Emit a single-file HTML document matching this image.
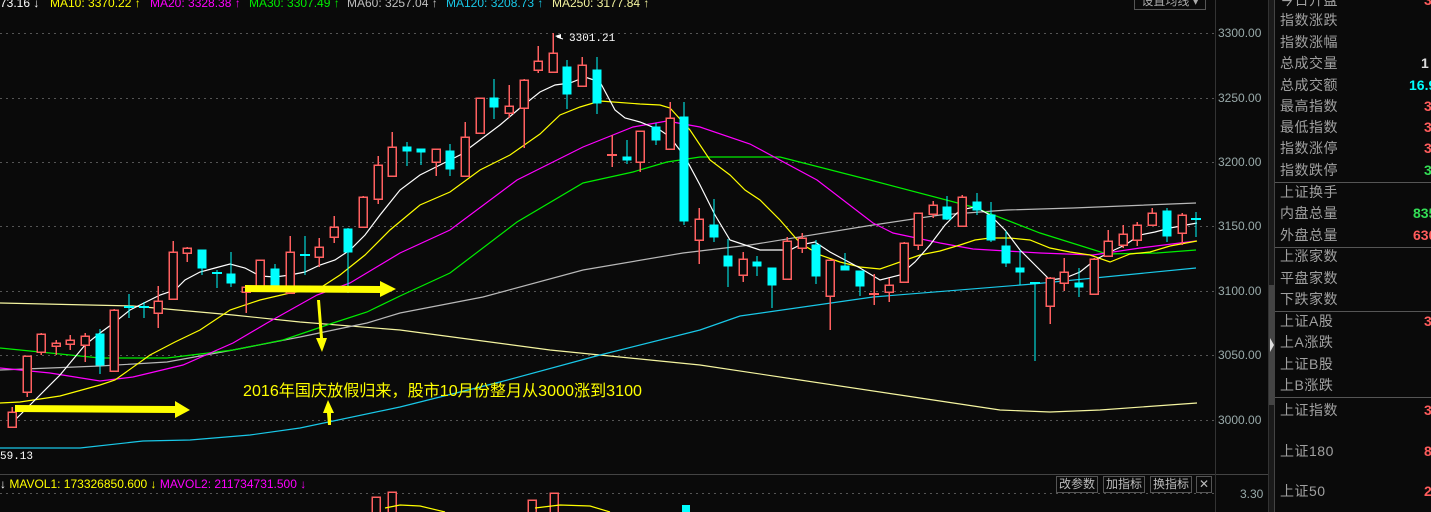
<!DOCTYPE html>
<html><head><meta charset="utf-8"><style>
body{margin:0;background:#0a0a0a;width:1431px;height:512px;overflow:hidden;position:relative;font-family:"Liberation Sans","Noto Sans CJK SC",sans-serif}
.t{position:absolute;white-space:nowrap}
.rl{position:absolute;left:1280px;font-size:14px;color:#a0a0a0;line-height:16px;font-family:"Liberation Sans","Noto Sans CJK SC",sans-serif;letter-spacing:0.5px}
.v{position:absolute;font-size:14px;line-height:16px;font-weight:bold}
.btn{position:absolute;top:476px;height:15px;border:1px solid #555;color:#bbb;font-size:12px;line-height:15px;padding:0 2px;background:#0a0a0a}
</style></head><body>
<svg width="1431" height="512" style="position:absolute;left:0;top:0">
<g stroke="#555" stroke-dasharray="2,4" stroke-width="1">
<line x1="0" y1="33.5" x2="1215" y2="33.5"/><line x1="0" y1="98.5" x2="1215" y2="98.5"/><line x1="0" y1="162.5" x2="1215" y2="162.5"/><line x1="0" y1="226.5" x2="1215" y2="226.5"/><line x1="0" y1="291.5" x2="1215" y2="291.5"/><line x1="0" y1="355.5" x2="1215" y2="355.5"/><line x1="0" y1="420.5" x2="1215" y2="420.5"/><line x1="0" y1="493.5" x2="1215" y2="493.5"/>
</g>
<line x1="0" y1="474.5" x2="1268" y2="474.5" stroke="#444"/>
<line x1="1215.5" y1="0" x2="1215.5" y2="512" stroke="#333"/>
<line x1="1268.5" y1="0" x2="1268.5" y2="512" stroke="#333"/>
<rect x="1269" y="0" width="5" height="512" fill="#1a1a1a"/>
<rect x="1269" y="285" width="5" height="120" fill="#444"/>
<polygon points="1270,338 1274,345 1270,352" fill="#ddd"/>
<line x1="1274.5" y1="0" x2="1274.5" y2="512" stroke="#444"/>
<g stroke="#555"><line x1="1275" y1="182.5" x2="1431" y2="182.5"/><line x1="1275" y1="247.5" x2="1431" y2="247.5"/><line x1="1275" y1="311.5" x2="1431" y2="311.5"/><line x1="1275" y1="397.5" x2="1431" y2="397.5"/></g>
<!-- MAs -->
<g fill="none" stroke-width="1.2">
<polyline stroke="#f5f5a0" points="0,303 133,306 233,315 300,322 400,330 550,350 700,365 800,380 900,395 1000,410 1050,412 1100,410 1197,403"/>
<polyline stroke="#19c8e8" points="0,448 80,448 143,441 190,440 250,435 300,428 400,407 500,382 600,355 700,330 740,316 873,297 1033,284 1196,268"/>
<polyline stroke="#b8b8b8" points="0,370 100,366 167,362 233,350 300,337 367,323 400,313 483,297 583,270 683,253 750,245 873,225 940,215 1007,210 1073,208 1196,203"/>
<polyline stroke="#00ee00" points="0,348 100,358 167,358 233,350 283,340 333,323 367,312 400,296 450,273 517,222 583,183 633,172 667,162 700,157 780,157 870,180 973,207 1040,233 1107,254 1157,253 1196,250"/>
<polyline stroke="#ff00ff" points="0,368 50,373 100,381 133,377 183,365 233,343 267,323 317,295 350,283 400,253 450,230 517,180 583,147 633,127 667,121 700,127 750,144 817,180 873,223 893,233 940,243 973,249 1040,253 1093,255 1140,248 1196,241"/>
<polyline stroke="#ffff00" points="0,403 20,402 60,396 100,385 115,380 150,355 175,342 200,330 230,310 260,300 290,293 320,288 340,275 365,255 390,230 420,205 450,192 480,170 510,155 540,134 560,115 580,107 600,101 640,104 660,105 670,108 690,130 710,160 730,175 745,190 760,200 780,220 800,243 820,255 840,262 860,267 880,269 900,262 920,255 940,251 960,245 975,240 990,238 1010,238 1030,240 1050,248 1070,252 1090,255 1110,262 1130,254 1150,252 1170,246 1197,241"/>
<polyline stroke="#ffffff" points="10,425 30,405 60,375 85,345 100,333 115,322 130,310 150,300 160,295 175,290 185,280 200,272 215,268 230,264 245,268 260,276 275,277 290,275 305,272 320,265 335,260 350,250 365,235 380,215 400,190 420,175 440,165 460,155 480,140 500,125 520,108 540,92 555,85 570,83 585,77 600,82 615,110 625,118 640,122 660,130 670,137 685,157 700,185 715,215 730,240 745,245 760,250 790,250 800,245 815,242 830,252 845,260 860,268 880,280 900,275 915,262 930,245 945,225 960,210 975,207 990,215 1005,230 1020,250 1035,265 1050,280 1065,278 1080,272 1095,260 1110,252 1125,245 1140,235 1155,232 1170,228 1197,223"/>
</g>
<!-- red candles -->
<g stroke="#ff6060" stroke-width="1.5" fill="#0a0a0a" shape-rendering="crispEdges">
<line x1="12" y1="407" x2="12" y2="428"/><rect x="8" y="412" width="8" height="15"/>
<line x1="27" y1="356" x2="27" y2="397"/><rect x="23" y="356" width="8" height="36"/>
<line x1="41" y1="333" x2="41" y2="355"/><rect x="37" y="334" width="8" height="18"/>
<line x1="56" y1="340" x2="56" y2="355"/><rect x="52" y="343" width="8" height="3"/>
<line x1="70" y1="335" x2="70" y2="350"/><rect x="66" y="340" width="8" height="4"/>
<line x1="85" y1="333" x2="85" y2="362"/><rect x="81" y="336" width="8" height="9"/>
<line x1="114" y1="309" x2="114" y2="371"/><rect x="110" y="310" width="8" height="61"/>
<line x1="158" y1="286" x2="158" y2="328"/><rect x="154" y="301" width="8" height="12"/>
<line x1="173" y1="241" x2="173" y2="299"/><rect x="169" y="252" width="8" height="47"/>
<line x1="187" y1="247" x2="187" y2="262"/><rect x="183" y="248" width="8" height="5"/>
<line x1="246" y1="288" x2="246" y2="313"/><rect x="242" y="287" width="8" height="5"/>
<line x1="260" y1="260" x2="260" y2="292"/><rect x="256" y="260" width="8" height="28"/>
<line x1="290" y1="236" x2="290" y2="294"/><rect x="286" y="252" width="8" height="41"/>
<line x1="319" y1="238" x2="319" y2="267"/><rect x="315" y="247" width="8" height="10"/>
<line x1="334" y1="216" x2="334" y2="243"/><rect x="330" y="227" width="8" height="10"/>
<line x1="363" y1="196" x2="363" y2="227"/><rect x="359" y="197" width="8" height="30"/>
<line x1="378" y1="156" x2="378" y2="204"/><rect x="374" y="165" width="8" height="34"/>
<line x1="392" y1="132" x2="392" y2="176"/><rect x="388" y="147" width="8" height="29"/>
<line x1="436" y1="149" x2="436" y2="176"/><rect x="432" y="149" width="8" height="13"/>
<line x1="465" y1="122" x2="465" y2="176"/><rect x="461" y="137" width="8" height="39"/>
<line x1="480" y1="98" x2="480" y2="133"/><rect x="476" y="98" width="8" height="35"/>
<line x1="509" y1="85" x2="509" y2="118"/><rect x="505" y="106" width="8" height="7"/>
<line x1="524" y1="79" x2="524" y2="148"/><rect x="520" y="80" width="8" height="28"/>
<line x1="538" y1="46" x2="538" y2="73"/><rect x="534" y="61" width="8" height="9"/>
<line x1="553" y1="33" x2="553" y2="73"/><rect x="549" y="53" width="8" height="19"/>
<line x1="582" y1="57" x2="582" y2="86"/><rect x="578" y="65" width="8" height="21"/>
<line x1="640" y1="131" x2="640" y2="172"/><rect x="636" y="131" width="8" height="31"/>
<line x1="670" y1="102" x2="670" y2="150"/><rect x="666" y="118" width="8" height="31"/>
<line x1="699" y1="208" x2="699" y2="264"/><rect x="695" y="219" width="8" height="21"/>
<line x1="743" y1="252" x2="743" y2="282"/><rect x="739" y="259" width="8" height="16"/>
<line x1="787" y1="237" x2="787" y2="279"/><rect x="783" y="241" width="8" height="38"/>
<line x1="802" y1="233" x2="802" y2="253"/><rect x="798" y="238" width="8" height="10"/>
<line x1="830" y1="260" x2="830" y2="330"/><rect x="826" y="260" width="8" height="36"/>
<line x1="889" y1="278" x2="889" y2="302"/><rect x="885" y="285" width="8" height="7"/>
<line x1="904" y1="242" x2="904" y2="282"/><rect x="900" y="243" width="8" height="39"/>
<line x1="918" y1="213" x2="918" y2="250"/><rect x="914" y="213" width="8" height="32"/>
<line x1="933" y1="201" x2="933" y2="218"/><rect x="929" y="205" width="8" height="9"/>
<line x1="962" y1="195" x2="962" y2="226"/><rect x="958" y="197" width="8" height="29"/>
<line x1="1050" y1="277" x2="1050" y2="324"/><rect x="1046" y="278" width="8" height="28"/>
<line x1="1064" y1="258" x2="1064" y2="291"/><rect x="1060" y="272" width="8" height="11"/>
<line x1="1094" y1="258" x2="1094" y2="294"/><rect x="1090" y="259" width="8" height="35"/>
<line x1="1108" y1="230" x2="1108" y2="256"/><rect x="1104" y="241" width="8" height="15"/>
<line x1="1123" y1="225" x2="1123" y2="248"/><rect x="1119" y="234" width="8" height="11"/>
<line x1="1137" y1="222" x2="1137" y2="246"/><rect x="1133" y="225" width="8" height="15"/>
<line x1="1152" y1="208" x2="1152" y2="225"/><rect x="1148" y="213" width="8" height="12"/>
<line x1="1182" y1="213" x2="1182" y2="245"/><rect x="1178" y="215" width="8" height="18"/>
<line x1="612" y1="135" x2="612" y2="167"/><line x1="607" y1="155" x2="617" y2="155" stroke-width="2"/>
<line x1="874" y1="274" x2="874" y2="305"/><line x1="869" y1="294" x2="879" y2="294" stroke-width="2"/>
<rect x="372" y="497" width="8" height="20"/><rect x="388" y="492" width="8" height="25"/><rect x="528" y="500" width="8" height="20"/><rect x="550" y="493" width="8" height="25"/>
</g>
<polyline fill="none" stroke="#ff0" stroke-width="1.2" points="385,508 400,505 420,506 445,512"/>
<polyline fill="none" stroke="#ff0" stroke-width="1.2" points="535,508 560,505 590,506 610,512"/>
<rect x="682" y="505" width="8" height="8" fill="#0ff"/>
<!-- cyan candles -->
<g stroke="#00ffff" stroke-width="1.2" fill="#00ffff" shape-rendering="crispEdges">
<line x1="100" y1="329" x2="100" y2="374"/><rect x="96" y="334" width="8" height="31"/>
<line x1="202" y1="250" x2="202" y2="275"/><rect x="198" y="250" width="8" height="18"/>
<line x1="231" y1="252" x2="231" y2="287"/><rect x="227" y="274" width="8" height="9"/>
<line x1="275" y1="264" x2="275" y2="287"/><rect x="271" y="269" width="8" height="16"/>
<line x1="348" y1="228" x2="348" y2="293"/><rect x="344" y="229" width="8" height="23"/>
<line x1="407" y1="142" x2="407" y2="166"/><rect x="403" y="147" width="8" height="4"/>
<line x1="421" y1="149" x2="421" y2="165"/><rect x="417" y="149" width="8" height="3"/>
<line x1="450" y1="144" x2="450" y2="176"/><rect x="446" y="151" width="8" height="18"/>
<line x1="494" y1="79" x2="494" y2="119"/><rect x="490" y="98" width="8" height="9"/>
<line x1="567" y1="60" x2="567" y2="109"/><rect x="563" y="67" width="8" height="27"/>
<line x1="597" y1="57" x2="597" y2="114"/><rect x="593" y="70" width="8" height="33"/>
<line x1="627" y1="140" x2="627" y2="164"/><rect x="623" y="157" width="8" height="3"/>
<line x1="656" y1="123" x2="656" y2="145"/><rect x="652" y="127" width="8" height="13"/>
<line x1="684" y1="102" x2="684" y2="225"/><rect x="680" y="117" width="8" height="104"/>
<line x1="714" y1="199" x2="714" y2="242"/><rect x="710" y="225" width="8" height="12"/>
<line x1="728" y1="239" x2="728" y2="287"/><rect x="724" y="256" width="8" height="10"/>
<line x1="757" y1="256" x2="757" y2="276"/><rect x="753" y="262" width="8" height="4"/>
<line x1="772" y1="268" x2="772" y2="308"/><rect x="768" y="268" width="8" height="17"/>
<line x1="816" y1="240" x2="816" y2="284"/><rect x="812" y="245" width="8" height="31"/>
<line x1="845" y1="253" x2="845" y2="270"/><rect x="841" y="266" width="8" height="4"/>
<line x1="860" y1="271" x2="860" y2="296"/><rect x="856" y="271" width="8" height="15"/>
<line x1="947" y1="196" x2="947" y2="220"/><rect x="943" y="207" width="8" height="12"/>
<line x1="977" y1="193" x2="977" y2="215"/><rect x="973" y="202" width="8" height="8"/>
<line x1="991" y1="202" x2="991" y2="242"/><rect x="987" y="215" width="8" height="25"/>
<line x1="1006" y1="231" x2="1006" y2="267"/><rect x="1002" y="246" width="8" height="17"/>
<line x1="1020" y1="250" x2="1020" y2="285"/><rect x="1016" y="268" width="8" height="4"/>
<line x1="1079" y1="268" x2="1079" y2="297"/><rect x="1075" y="283" width="8" height="4"/>
<line x1="1167" y1="208" x2="1167" y2="242"/><rect x="1163" y="211" width="8" height="25"/>
<line x1="129" y1="294" x2="129" y2="318"/><line x1="124" y1="307" x2="134" y2="307" stroke-width="2"/>
<line x1="144" y1="302" x2="144" y2="318"/><line x1="139" y1="307" x2="149" y2="307" stroke-width="2"/>
<line x1="217" y1="270" x2="217" y2="288"/><line x1="212" y1="273" x2="222" y2="273" stroke-width="2"/>
<line x1="305" y1="236" x2="305" y2="275"/><line x1="300" y1="255" x2="310" y2="255" stroke-width="2"/>
<line x1="1035" y1="283" x2="1035" y2="361"/><line x1="1030" y1="283" x2="1040" y2="283" stroke-width="2"/>
<line x1="1196" y1="212" x2="1196" y2="237"/><line x1="1191" y1="219" x2="1201" y2="219" stroke-width="2"/>
</g>
<!-- arrows -->
<g fill="#ffff00">
<polygon points="15,405 175,406 175,401 190,410 175,418 175,413 15,412"/>
<polygon points="245,285 380,286 380,281 396,289 380,297 380,293 245,292"/>
<polygon points="317,300 320,300 323,338 327,338 322,352 316,338 320,338"/>
<polygon points="328,400 334,413 331,413 331,425 328,425 327,413 323,413"/>
</g>
<polyline points="557,37 563,39" stroke="#fff" fill="none"/>
<polygon points="555,36 561,34 561,39" fill="#fff"/>
<text x="569" y="41" fill="#fff" font-size="11" font-family="Liberation Mono">3301.21</text>
<text x="0" y="459" fill="#fff" font-size="11" font-family="Liberation Mono">59.13</text>
<text x="243" y="396" fill="#ffff00" font-size="16" font-family="Liberation Sans, Noto Sans CJK SC, sans-serif" textLength="399" lengthAdjust="spacingAndGlyphs">2016年国庆放假归来，股市10月份整月从3000涨到3100</text>
</svg>
<div class="t" style="top:-4px;left:0;font-size:12px;line-height:14px">
<span style="position:absolute;left:0;color:#fff">73.16 ↓</span>
<span style="position:absolute;left:50px;color:#ffff00">MA10: 3370.22 ↑</span>
<span style="position:absolute;left:150px;color:#ff00ff">MA20: 3328.38 ↑</span>
<span style="position:absolute;left:249px;color:#00ee00">MA30: 3307.49 ↑</span>
<span style="position:absolute;left:347px;color:#c0c0c0">MA60: 3257.04 ↑</span>
<span style="position:absolute;left:446px;color:#19c8e8">MA120: 3208.73 ↑</span>
<span style="position:absolute;left:552px;color:#f5f5a0">MA250: 3177.84 ↑</span>
</div>
<div class="t" style="left:1134px;top:-7px;width:70px;height:15px;border:1px solid #555;color:#aaa;font-size:12px;line-height:15px;text-align:center">设置均线 ▾</div>
<div class="t" style="left:1218px;color:#9aa;font-size:12px;line-height:14px">
<span style="position:absolute;top:26px">3300.00</span><span style="position:absolute;top:91px">3250.00</span><span style="position:absolute;top:155px">3200.00</span><span style="position:absolute;top:219px">3150.00</span><span style="position:absolute;top:284px">3100.00</span><span style="position:absolute;top:348px">3050.00</span><span style="position:absolute;top:413px">3000.00</span><span style="position:absolute;top:487px;left:22px">3.30</span>
</div>
<div class="t" style="top:477px;left:0;font-size:12px;line-height:14px">
<span style="color:#fff">↓</span> <span style="color:#ffff00">MAVOL1: 173326850.600 ↓</span> <span style="color:#ff00ff">MAVOL2: 211734731.500 ↓</span>
</div>
<div class="btn" style="left:1056px">改参数</div>
<div class="btn" style="left:1103px">加指标</div>
<div class="btn" style="left:1150px">换指标</div>
<div class="btn" style="left:1196px;padding:0 1px;width:12px;text-align:center">✕</div>
<div class="rl" style="top:-8px">今日开盘</div>
<div class="rl" style="top:12px">指数涨跌</div>
<div class="rl" style="top:34px">指数涨幅</div>
<div class="rl" style="top:55px">总成交量</div>
<div class="rl" style="top:77px">总成交额</div>
<div class="rl" style="top:98px">最高指数</div>
<div class="rl" style="top:119px">最低指数</div>
<div class="rl" style="top:140px">指数涨停</div>
<div class="rl" style="top:162px">指数跌停</div>
<div class="rl" style="top:184px">上证换手</div>
<div class="rl" style="top:205px">内盘总量</div>
<div class="rl" style="top:227px">外盘总量</div>
<div class="rl" style="top:248px">上涨家数</div>
<div class="rl" style="top:270px">平盘家数</div>
<div class="rl" style="top:291px">下跌家数</div>
<div class="rl" style="top:313px">上证A股</div>
<div class="rl" style="top:334px">上A涨跌</div>
<div class="rl" style="top:356px">上证B股</div>
<div class="rl" style="top:377px">上B涨跌</div>
<div class="rl" style="top:402px">上证指数</div>
<div class="rl" style="top:443px">上证180</div>
<div class="rl" style="top:483px">上证50</div>
<div class="v" style="top:-8px;left:1424px;color:#ff5c5c">3</div>
<div class="v" style="top:55px;left:1421px;color:#ddd">1</div>
<div class="v" style="top:77px;left:1409px;color:#00ffff">16.9</div>
<div class="v" style="top:98px;left:1424px;color:#ff5c5c">3</div>
<div class="v" style="top:119px;left:1424px;color:#ff5c5c">3</div>
<div class="v" style="top:140px;left:1424px;color:#ff5c5c">3</div>
<div class="v" style="top:162px;left:1424px;color:#33dd55">3</div>
<div class="v" style="top:205px;left:1413px;color:#33dd55">835</div>
<div class="v" style="top:227px;left:1413px;color:#ff5c5c">630</div>
<div class="v" style="top:313px;left:1424px;color:#ff5c5c">3</div>
<div class="v" style="top:402px;left:1424px;color:#ff5c5c">3</div>
<div class="v" style="top:443px;left:1424px;color:#ff5c5c">8</div>
<div class="v" style="top:483px;left:1424px;color:#ff5c5c">2</div>
</body></html>
